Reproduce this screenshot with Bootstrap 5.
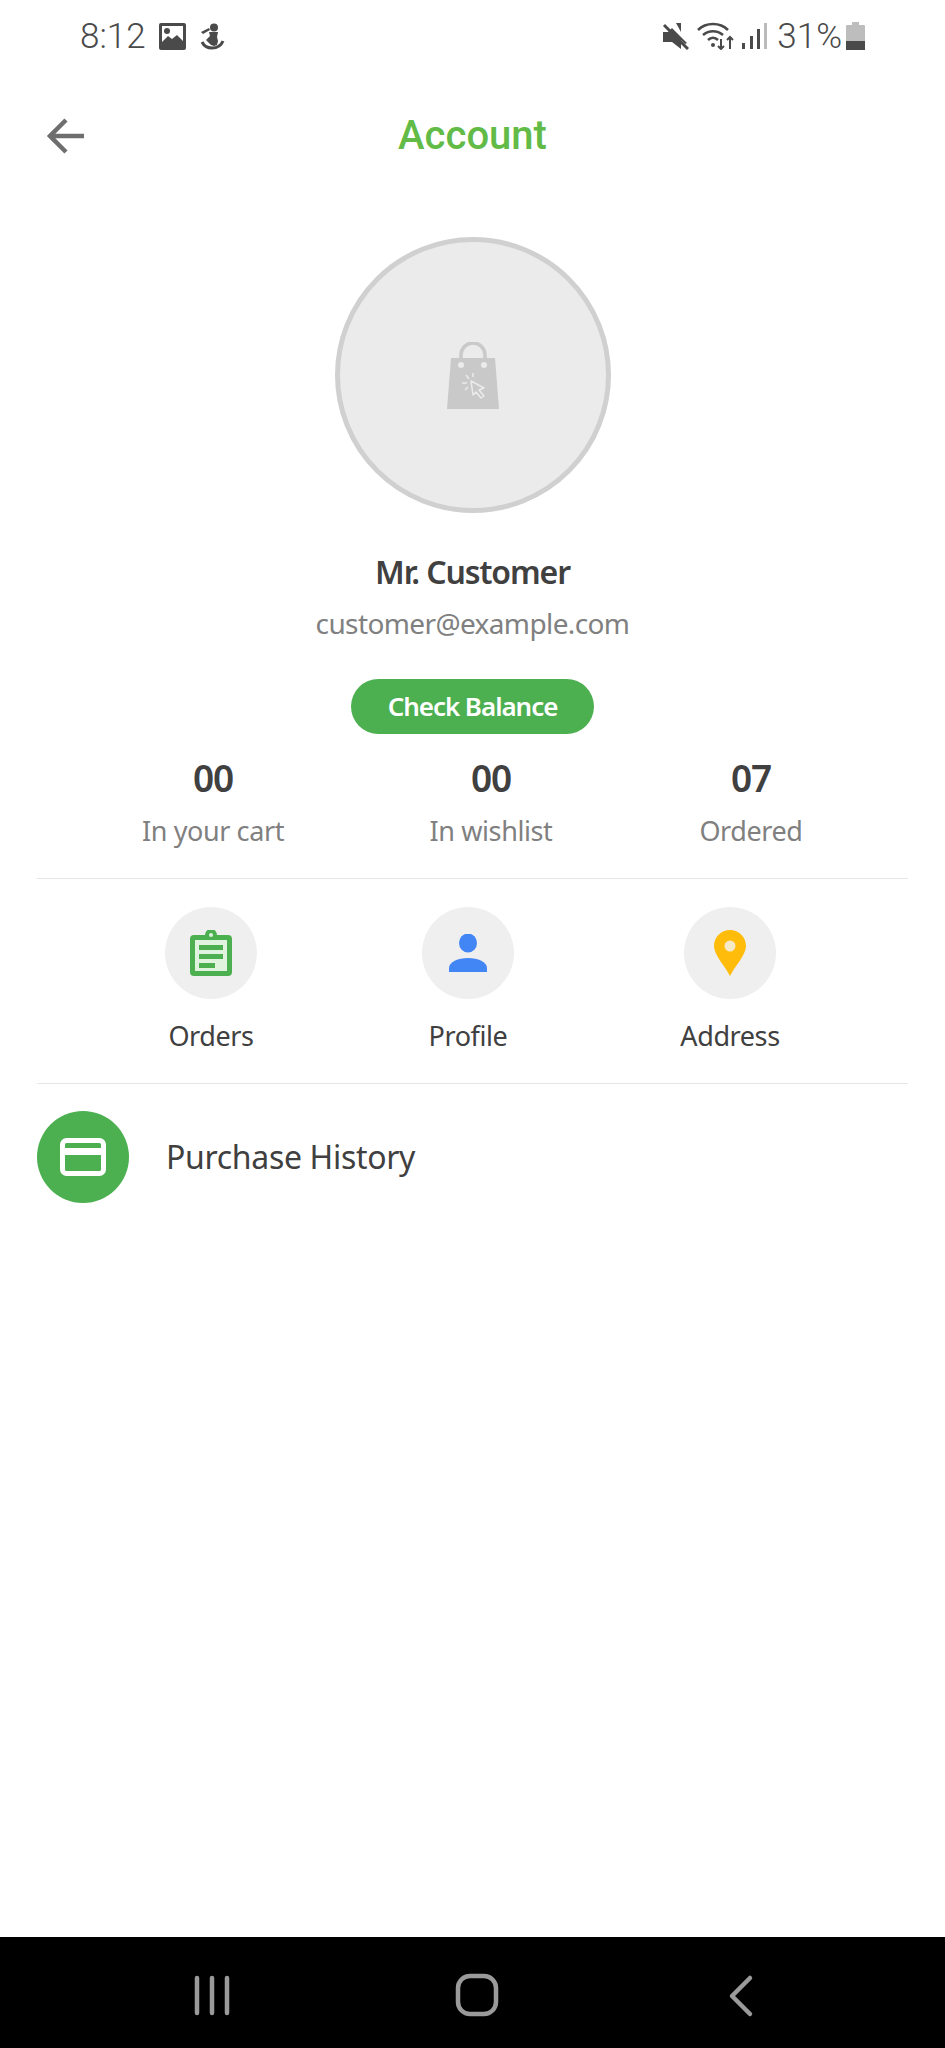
<!doctype html>
<html lang="en"><head><meta charset="utf-8"><title>Account</title>
<link href="https://cdn.jsdelivr.net/npm/bootstrap@5.3.0/dist/css/bootstrap.min.css" rel="stylesheet">
<style>
html,body{height:100%}
body{background:#fff;color:#404040;font-family:"Noto Sans",sans-serif}
.screen{height:2048px;width:945px;overflow:hidden}
.statusrow{height:72px;padding:0 80px;color:#4a4a4a;font-family:Roboto,sans-serif;font-size:35px;font-weight:300}
.statusrow span{line-height:1}
.gapphoto{margin-left:13px}
.gappct{margin-left:10px}
.headrow{height:128px;padding:0 46px}
.acct{font-family:Roboto,sans-serif;font-weight:500;font-size:40px;color:#62bb46;line-height:1}
.headside{width:38px}
.avatarc{width:276px;height:276px;border:5px solid #d0d0d0;background:#ebebeb;margin-top:37px}
.uname{margin-top:34px;font-size:32px;font-weight:600;letter-spacing:-.035em;line-height:50px;color:#404040}
.umail{margin-top:6px;font-size:28px;letter-spacing:-.022em;line-height:40px;color:#808080}
.balbtn{margin-top:36px;width:243px;height:55px;background:#4caf50;border-radius:28px;color:#fff;font-size:26px;font-weight:600;letter-spacing:-.04em;border:0;padding:0;line-height:55px}
.statgrid{display:grid;grid-template-columns:352px 204px 316px;margin:19px 37px 0}
.statnum{font-size:37px;font-weight:600;letter-spacing:-.03em;line-height:50px;color:#404040}
.statlab{margin-top:8px;font-size:27px;letter-spacing:-.015em;line-height:40px;color:#808080}
.rule{height:1px;background:#e6e6e6;margin:27px 37px 0}
.actgrid{display:grid;grid-template-columns:348px 166px 358px;margin:28px 37px 0}
.actcirc{width:92px;height:92px;background:#efefef}
.actlab{margin-top:17px;font-size:27px;letter-spacing:-.015em;line-height:40px;color:#404040}
.rule2{margin-top:27px}
.histrow{margin:27px 37px 0;gap:37px}
.histcirc{width:92px;height:92px;background:#4caf50}
.histtxt{font-size:32px;letter-spacing:-.01em;line-height:40px;color:#404040}
.sysnav{height:111px;background:#000}
</style></head>
<body>
<div class="screen d-flex flex-column">
  <div class="statusrow d-flex align-items-center justify-content-between">
    <div class="d-flex align-items-center">
      <span>8:12</span>
      <svg class="gapphoto" width="27" height="27" viewBox="0 0 27 27"><path fill="#4a4a4a" d="M2 0h23a2 2 0 0 1 2 2v23a2 2 0 0 1-2 2H2a2 2 0 0 1-2-2V2a2 2 0 0 1 2-2z"/><path fill="#fff" d="M3 3h21v15l-6-6-5 4-4-3-6 6z"/><circle cx="8" cy="8" r="3" fill="#4a4a4a"/></svg>
      <svg class="gapphoto" width="26" height="27" viewBox="0 0 26 27" fill="#4a4a4a"><circle cx="15" cy="4.500" r="4"/><path d="M2 9l8-4 1 2-7 4z"/><path d="M10 9h9l-1 5 1 4-1 4-3 1-3-1-5-5 4-4z"/><path fill="none" stroke="#4a4a4a" stroke-width="3" d="M3 19c2 4 6 6 10 6s9-2 11-7"/></svg>
    </div>
    <div class="d-flex align-items-center">
      <svg width="27" height="27" viewBox="0 0 27 27"><path fill="#4a4a4a" d="M1 9h5l4-4 15 15-2 1-4-4v9l-9-7H1zM14 0h5v9z"/><path stroke="#4a4a4a" stroke-width="3" d="M2 2l24 24"/></svg>
      <svg class="ms-2" width="37" height="28" viewBox="0 0 37 28" fill="none" stroke="#4a4a4a" stroke-width="2.600"><path d="M1 8c8-8 22-8 30 0M6 13c6-5 14-5 20 0M11 18c3-3 7-3 10 0"/><circle cx="16" cy="23" r="2" fill="#4a4a4a" stroke="none"/><path stroke-width="2" d="M24 17v10M21 24l3 3 3-3M33 27V15M30 18l3-3 3 3"/></svg>
      <svg class="ms-2" width="25" height="27" viewBox="0 0 25 27"><rect x="0" y="20" width="3" height="6" fill="#4a4a4a"/><rect x="8" y="13" width="3" height="13" fill="#4a4a4a"/><rect x="15" y="6" width="3" height="20" fill="#4a4a4a"/><rect x="22" y="0" width="3" height="26" fill="#bbb"/></svg>
      <span class="gappct">31%</span>
      <svg class="ms-1" width="19" height="28" viewBox="0 0 19 28"><path fill="#bdbdbd" d="M6 0h7v3h5a1 1 0 0 1 1 1v19H0V4a1 1 0 0 1 1-1h5z"/><rect y="19" width="19" height="9" fill="#4a4a4a"/></svg>
    </div>
  </div>
  <div class="headrow d-flex align-items-center justify-content-between">
    <svg class="headside" width="38" height="36" viewBox="0 0 38 36" fill="none" stroke="#6e6e6e" stroke-width="4.500"><path d="M38 18H4M20 2L4 18l16 16"/></svg>
    <div class="acct">Account</div>
    <div class="headside"></div>
  </div>
  <div class="d-flex flex-column align-items-center text-center">
    <div class="avatarc rounded-circle d-flex align-items-center justify-content-center">
      <svg width="52" height="67" viewBox="0 0 52 67"><path fill="none" stroke="#c9c9c9" stroke-width="3.500" d="M14 22V13a12 12 0 0 1 24 0v9"/><path fill="#c9c9c9" d="M4 16h44l4 51H0z"/><circle cx="14" cy="23" r="3" fill="#ebebeb"/><circle cx="37" cy="23" r="3" fill="#ebebeb"/><path fill="#c9c9c9" stroke="#ebebeb" stroke-width="1.500" stroke-linejoin="round" d="M24 39l13 7-5 2 5 6-3 2-5-6-3 3z"/><path stroke="#ebebeb" stroke-width="1.500" d="M22 37l-3-4M20 41h-5M26 35v-4M21 45l-3 3"/></svg>
    </div>
    <div class="uname">Mr. Customer</div>
    <div class="umail">customer@example.com</div>
    <button class="balbtn" type="button">Check Balance</button>
  </div>
  <div class="statgrid text-center">
    <div><div class="statnum">00</div><div class="statlab">In your cart</div></div>
    <div><div class="statnum">00</div><div class="statlab">In wishlist</div></div>
    <div><div class="statnum">07</div><div class="statlab">Ordered</div></div>
  </div>
  <div class="rule"></div>
  <div class="actgrid text-center">
    <div class="d-flex flex-column align-items-center">
      <div class="actcirc rounded-circle d-flex align-items-center justify-content-center">
        <svg width="42" height="46" viewBox="0 0 42 46"><path fill="#4caf50" d="M4 5h11a6 6 0 0 1 12 0h11a4 4 0 0 1 4 4v33a4 4 0 0 1-4 4H4a4 4 0 0 1-4-4V9a4 4 0 0 1 4-4z"/><rect x="5" y="10" width="32" height="31" fill="#dff3df"/><circle cx="21" cy="5" r="2" fill="#dff3df"/><path fill="#4caf50" d="M9 15h24v5H9zM9 24h24v5H9zM9 33h16v5H9z"/></svg>
      </div>
      <div class="actlab">Orders</div>
    </div>
    <div class="d-flex flex-column align-items-center">
      <div class="actcirc rounded-circle d-flex align-items-center justify-content-center">
        <svg width="38" height="38" viewBox="0 0 38 38"><ellipse cx="19" cy="9" rx="9" ry="9.500" fill="#4285f4"/><path fill="#4285f4" d="M0 38v-4c0-6 9-10 19-10s19 4 19 10v4z"/></svg>
      </div>
      <div class="actlab">Profile</div>
    </div>
    <div class="d-flex flex-column align-items-center">
      <div class="actcirc rounded-circle d-flex align-items-center justify-content-center">
        <svg width="32" height="46" viewBox="0 0 32 46"><path fill="#ffbc0a" d="M16 0c9 0 16 7 16 16 0 9-11 20-16 30C11 36 0 25 0 16 0 7 7 0 16 0z"/><circle cx="16" cy="16" r="5.500" fill="#f5e9c8"/></svg>
      </div>
      <div class="actlab">Address</div>
    </div>
  </div>
  <div class="rule rule2"></div>
  <div class="histrow d-flex align-items-center">
    <div class="histcirc rounded-circle d-flex align-items-center justify-content-center flex-shrink-0">
      <svg width="46" height="38" viewBox="0 0 46 38"><rect x="2.500" y="2.500" width="41" height="33" rx="4" fill="none" stroke="#fff" stroke-width="5"/><rect x="2" y="10" width="42" height="7" fill="#fff"/></svg>
    </div>
    <div class="histtxt">Purchase History</div>
  </div>
  <div class="sysnav mt-auto d-flex align-items-center">
    <svg width="945" height="111" viewBox="0 0 945 111" fill="none" stroke="#9a9a9a" stroke-width="4.500" stroke-linecap="round">
      <path d="M197 41v35M212 41v35M227 41v35"/>
      <rect x="458" y="39" width="38" height="38" rx="12"/>
      <path d="M750 41l-18 18 18 18" stroke-linejoin="round"/>
    </svg>
  </div>
</div>
</body></html>
